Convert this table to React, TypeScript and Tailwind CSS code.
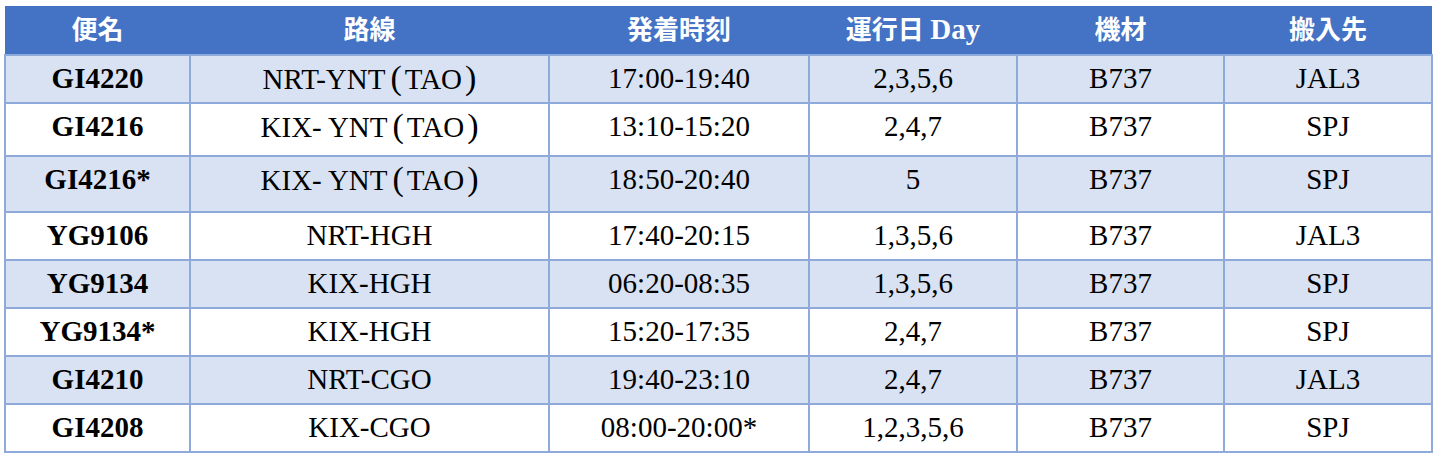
import React from 'react'

const COLS = [185, 359, 260, 208, 207, 208]

const ROWS = [
  { no: 'GI4220', route: 'NRT-YNT(TAO)', time: '17:00-19:40', days: '2,3,5,6', ac: 'B737', to: 'JAL3', h: 48 },
  { no: 'GI4216', route: 'KIX- YNT(TAO)', time: '13:10-15:20', days: '2,4,7', ac: 'B737', to: 'SPJ', h: 53 },
  { no: 'GI4216*', route: 'KIX- YNT(TAO)', time: '18:50-20:40', days: '5', ac: 'B737', to: 'SPJ', h: 56 },
  { no: 'YG9106', route: 'NRT-HGH', time: '17:40-20:15', days: '1,3,5,6', ac: 'B737', to: 'JAL3', h: 48 },
  { no: 'YG9134', route: 'KIX-HGH', time: '06:20-08:35', days: '1,3,5,6', ac: 'B737', to: 'SPJ', h: 48 },
  { no: 'YG9134*', route: 'KIX-HGH', time: '15:20-17:35', days: '2,4,7', ac: 'B737', to: 'SPJ', h: 48 },
  { no: 'GI4210', route: 'NRT-CGO', time: '19:40-23:10', days: '2,4,7', ac: 'B737', to: 'JAL3', h: 48 },
  { no: 'GI4208', route: 'KIX-CGO', time: '08:00-20:00*', days: '1,2,3,5,6', ac: 'B737', to: 'SPJ', h: 48 },
]

const font = { fontFamily: '"Liberation Serif", "Noto Sans CJK JP", serif' }

// the source used wide, tall parentheses, so make them a bit bigger with some room
function Route({ text }: { text: string }) {
  const m = text.match(/^(.*)\((.*)\)$/)
  if (!m) return <>{text}</>
  return (
    <>
      {m[1]}
      <span className="text-[34px] ml-[5px] mr-[3px]">(</span>
      {m[2]}
      <span className="text-[34px] ml-[3px]">)</span>
    </>
  )
}

export default function App() {
  return (
    <div className="bg-white w-[1437px] h-[457px] pt-[6px] pl-[4px]" style={font}>
      <table className="border-collapse table-fixed w-[1428px] text-black">
        <colgroup>
          {COLS.map((w, i) => <col key={i} style={{ width: w }} />)}
        </colgroup>
        <thead>
          <tr className="h-[49px] bg-[#4472C4] text-white font-bold">
            <th className="text-[26px] font-bold align-middle">便名</th>
            <th className="text-[26px] font-bold align-middle">路線</th>
            <th className="text-[26px] font-bold align-middle">発着時刻</th>
            <th className="text-[26px] font-bold align-middle">
              運行日 <span className="text-[29px]">Day</span>
            </th>
            <th className="text-[26px] font-bold align-middle">機材</th>
            <th className="text-[26px] font-bold align-middle">搬入先</th>
          </tr>
        </thead>
        <tbody>
          {ROWS.map((r, i) => (
            <tr key={i} className={i % 2 === 0 ? 'bg-[#D9E2F3]' : 'bg-white'} style={{ height: r.h }}>
              <td className="border-2 border-[#8EAADB] text-center align-top pt-[5px] text-[29px] leading-[34px] font-bold">{r.no}</td>
              <td className="border-2 border-[#8EAADB] text-center align-top pt-[5px] text-[29px] leading-[34px]"><Route text={r.route} /></td>
              <td className="border-2 border-[#8EAADB] text-center align-top pt-[5px] text-[29px] leading-[34px]">{r.time}</td>
              <td className="border-2 border-[#8EAADB] text-center align-top pt-[5px] text-[29px] leading-[34px]">{r.days}</td>
              <td className="border-2 border-[#8EAADB] text-center align-top pt-[5px] text-[29px] leading-[34px]">{r.ac}</td>
              <td className="border-2 border-[#8EAADB] text-center align-top pt-[5px] text-[29px] leading-[34px]">{r.to}</td>
            </tr>
          ))}
        </tbody>
      </table>
    </div>
  )
}
